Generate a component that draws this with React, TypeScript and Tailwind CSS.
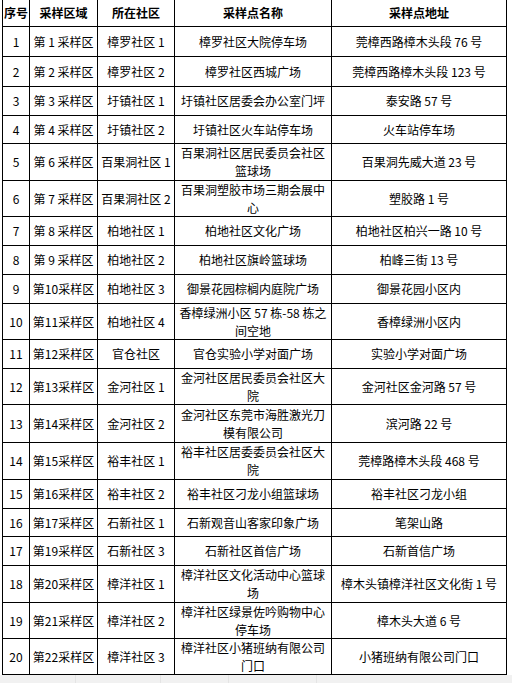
const rows: [string, string, string, string[], string, string][] = [
  ["1", "第 1 采样区", "樟罗社区 1", ["樟罗社区大院停车场"], "莞樟西路樟木头段 76 号", "h-[29px]"],
  ["2", "第 2 采样区", "樟罗社区 2", ["樟罗社区西城广场"], "莞樟西路樟木头段 123 号", "h-[29px]"],
  ["3", "第 3 采样区", "圩镇社区 1", ["圩镇社区居委会办公室门坪"], "泰安路 57 号", "h-[28px]"],
  ["4", "第 4 采样区", "圩镇社区 2", ["圩镇社区火车站停车场"], "火车站停车场", "h-[27px]"],
  ["5", "第 6 采样区", "百果洞社区 1", ["百果洞社区居民委员会社区", "篮球场"], "百果洞先威大道 23 号", "h-[36px]"],
  ["6", "第 7 采样区", "百果洞社区 2", ["百果洞塑胶市场三期会展中", "心"], "塑胶路 1 号", "h-[35px]"],
  ["7", "第 8 采样区", "柏地社区 1", ["柏地社区文化广场"], "柏地社区柏兴一路 10 号", "h-[28px]"],
  ["8", "第 9 采样区", "柏地社区 2", ["柏地社区旗岭篮球场"], "柏峰三街 13 号", "h-[28px]"],
  ["9", "第10采样区", "柏地社区 3", ["御景花园棕榈内庭院广场"], "御景花园小区内", "h-[28px]"],
  ["10", "第11采样区", "柏地社区 4", ["香樟绿洲小区 57 栋-58 栋之", "间空地"], "香樟绿洲小区内", "h-[35px]"],
  ["11", "第12采样区", "官仓社区", ["官仓实验小学对面广场"], "实验小学对面广场", "h-[28px]"],
  ["12", "第13采样区", "金河社区 1", ["金河社区居民委员会社区大", "院"], "金河社区金河路 57 号", "h-[35px]"],
  ["13", "第14采样区", "金河社区 2", ["金河社区东莞市海胜激光刀", "模有限公司"], "滨河路 22 号", "h-[37px]"],
  ["14", "第15采样区", "裕丰社区 1", ["裕丰社区居委委员会社区大", "院"], "莞樟路樟木头段 468 号", "h-[36px]"],
  ["15", "第16采样区", "裕丰社区 2", ["裕丰社区刁龙小组篮球场"], "裕丰社区刁龙小组", "h-[28px]"],
  ["16", "第17采样区", "石新社区 1", ["石新观音山客家印象广场"], "笔架山路", "h-[27px]"],
  ["17", "第19采样区", "石新社区 3", ["石新社区首信广场"], "石新首信广场", "h-[28px]"],
  ["18", "第20采样区", "樟洋社区 1", ["樟洋社区文化活动中心篮球", "场"], "樟木头镇樟洋社区文化街 1 号", "h-[36px]"],
  ["19", "第21采样区", "樟洋社区 2", ["樟洋社区绿景佐吟购物中心", "停车场"], "樟木头大道 6 号", "h-[35px]"],
  ["20", "第22采样区", "樟洋社区 3", ["樟洋社区小猪班纳有限公司", "门口"], "小猪班纳有限公司门口", "h-[35px]"],
];

const headers = ["序号", "采样区域", "所在社区", "采样点名称", "采样点地址"];

const cell = "bg-white flex flex-col items-center justify-center text-center whitespace-nowrap";

export default function App() {
  return (
    <div
      className="w-[512px] h-[683px] bg-white text-black text-[12px] leading-[18px] overflow-hidden"
      style={{ fontFamily: '"Noto Sans CJK SC", "Liberation Sans", sans-serif' }}
    >
      <div className="ml-[2px] w-[505px] bg-black px-[1px] pb-[1px] grid grid-cols-[26px_67px_76px_156px_174px] gap-[1px]">
        {headers.map((h) => (
          <div key={h} className={`${cell} h-[26px] font-bold`}>
            {h}
          </div>
        ))}
        {rows.map(([no, area, comm, name, addr, h]) => (
          <div key={no} className="contents">
            <div className={`${cell} ${h}`}>{no}</div>
            <div className={`${cell} ${h}`}>{area}</div>
            <div className={`${cell} ${h}`}>{comm}</div>
            <div className={`${cell} ${h}`}>
              {name.map((l) => (
                <span key={l}>{l}</span>
              ))}
            </div>
            <div className={`${cell} ${h}`}>{addr}</div>
          </div>
        ))}
      </div>
      <div className="h-[10px] bg-[#f1f1f1] flex">
        <div className="w-[76px] border-r border-[#e4e4e4]" />
        <div className="w-[85px] border-r border-[#e4e4e4]" />
        <div className="w-[68px] border-r border-[#e4e4e4]" />
        <div className="w-[88px] border-r border-[#e4e4e4]" />
      </div>
    </div>
  );
}
